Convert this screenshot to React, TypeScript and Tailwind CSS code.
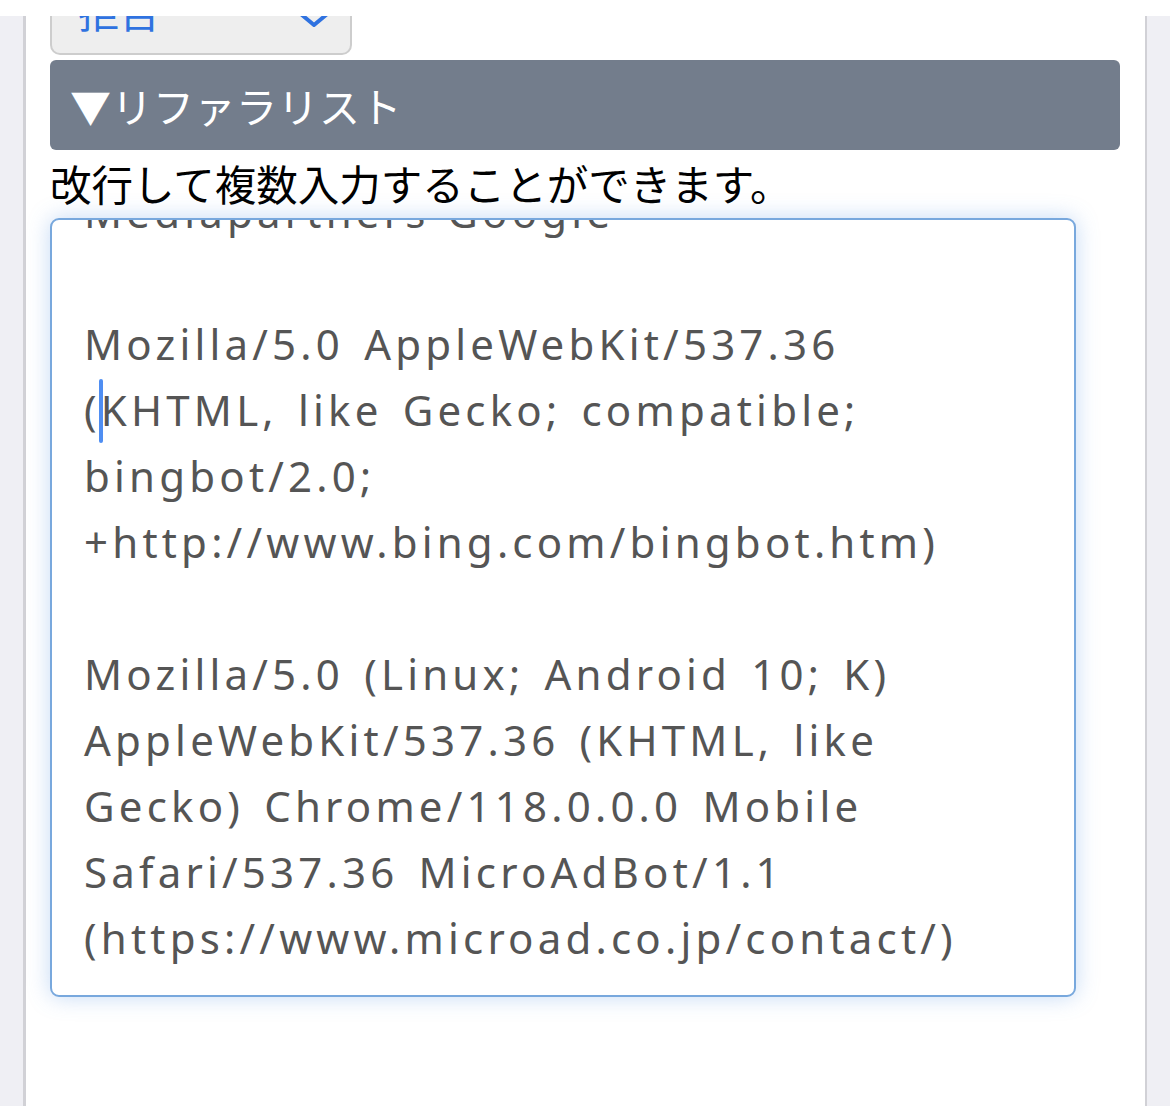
const referrers: string[] = [
  "Mediapartners-Google",
  "",
  "Mozilla/5.0 AppleWebKit/537.36",
  "(KHTML, like Gecko; compatible;",
  "bingbot/2.0;",
  "+http://www.bing.com/bingbot.htm)",
  "",
  "Mozilla/5.0 (Linux; Android 10; K)",
  "AppleWebKit/537.36 (KHTML, like",
  "Gecko) Chrome/118.0.0.0 Mobile",
  "Safari/537.36 MicroAdBot/1.1",
  "(https://www.microad.co.jp/contact/)",
];

const jp = "font-['Noto_Sans_CJK_JP','Noto_Sans',sans-serif]";

export default function App() {
  return (
    <div className={`flex h-[1106px] w-[1170px] flex-col overflow-hidden bg-white ${jp}`}>
      {/* status strip */}
      <div className="h-[16px] shrink-0 bg-white" />

      <div className="flex flex-1">
        <div className="w-[26px] shrink-0 border-r-[3px] border-[#d1d1d6] bg-[#efeff4]" />

        <main className="flex flex-1 flex-col bg-white pl-[24px] pr-[25px]">
          {/* select (scrolled, top cut off) */}
          <div className="flex h-[39px] w-[302px] items-start justify-between overflow-hidden rounded-b-[10px] border-x-2 border-b-2 border-[#cdcdcd] bg-[#eeeeee] pl-[26px] pr-[20px]">
            <span className="-mt-[30px] text-[41px] leading-[48px] text-[#2f72e0]">拒否</span>
            <svg className="-mt-[4px] mr-[1px]" width="30" height="16" viewBox="0 0 30 16" fill="none">
              <path d="M3 3 L15 13 L27 3" stroke="#2f72e0" strokeWidth="4" strokeLinecap="round" strokeLinejoin="round" />
            </svg>
          </div>

          {/* section header */}
          <div className="mt-[5px] flex h-[90px] items-center rounded-[6px] bg-[#737d8c] pl-[20px]">
            <span className="text-[41px] leading-none tracking-[0.5px] text-white">▼リファラリスト</span>
          </div>

          <p className="mt-[11px] text-[41.5px] leading-[44px] text-black">
            改行して複数入力することができます。
          </p>

          {/* textarea (focused, scrolled) */}
          <div className="mt-[13px] h-[779px] w-[1026px] overflow-hidden rounded-[9px] border-[2px] border-[#78a8dd] bg-white shadow-[0_0_22px_rgba(90,150,225,0.35)]">
            <div className="-mt-[41px] pl-[32px] font-['Noto_Sans',sans-serif] text-[42px] leading-[66px] tracking-[4.2px] text-[#555555] [word-spacing:5px]">
              {referrers.map((line, i) =>
                line === "" ? (
                  <div key={i} className="h-[66px]" />
                ) : i === 3 ? (
                  <div key={i} className="relative whitespace-nowrap">
                    {line}
                    <span className="absolute left-[15px] top-[2px] h-[64px] w-[4px] rounded-full bg-[#4f8ef2]" />
                  </div>
                ) : (
                  <div key={i} className="whitespace-nowrap">
                    {line}
                  </div>
                ),
              )}
            </div>
          </div>
        </main>

        <div className="w-[25px] shrink-0 border-l-[2px] border-[#d1d1d6] bg-[#efeff4]" />
      </div>
    </div>
  );
}
